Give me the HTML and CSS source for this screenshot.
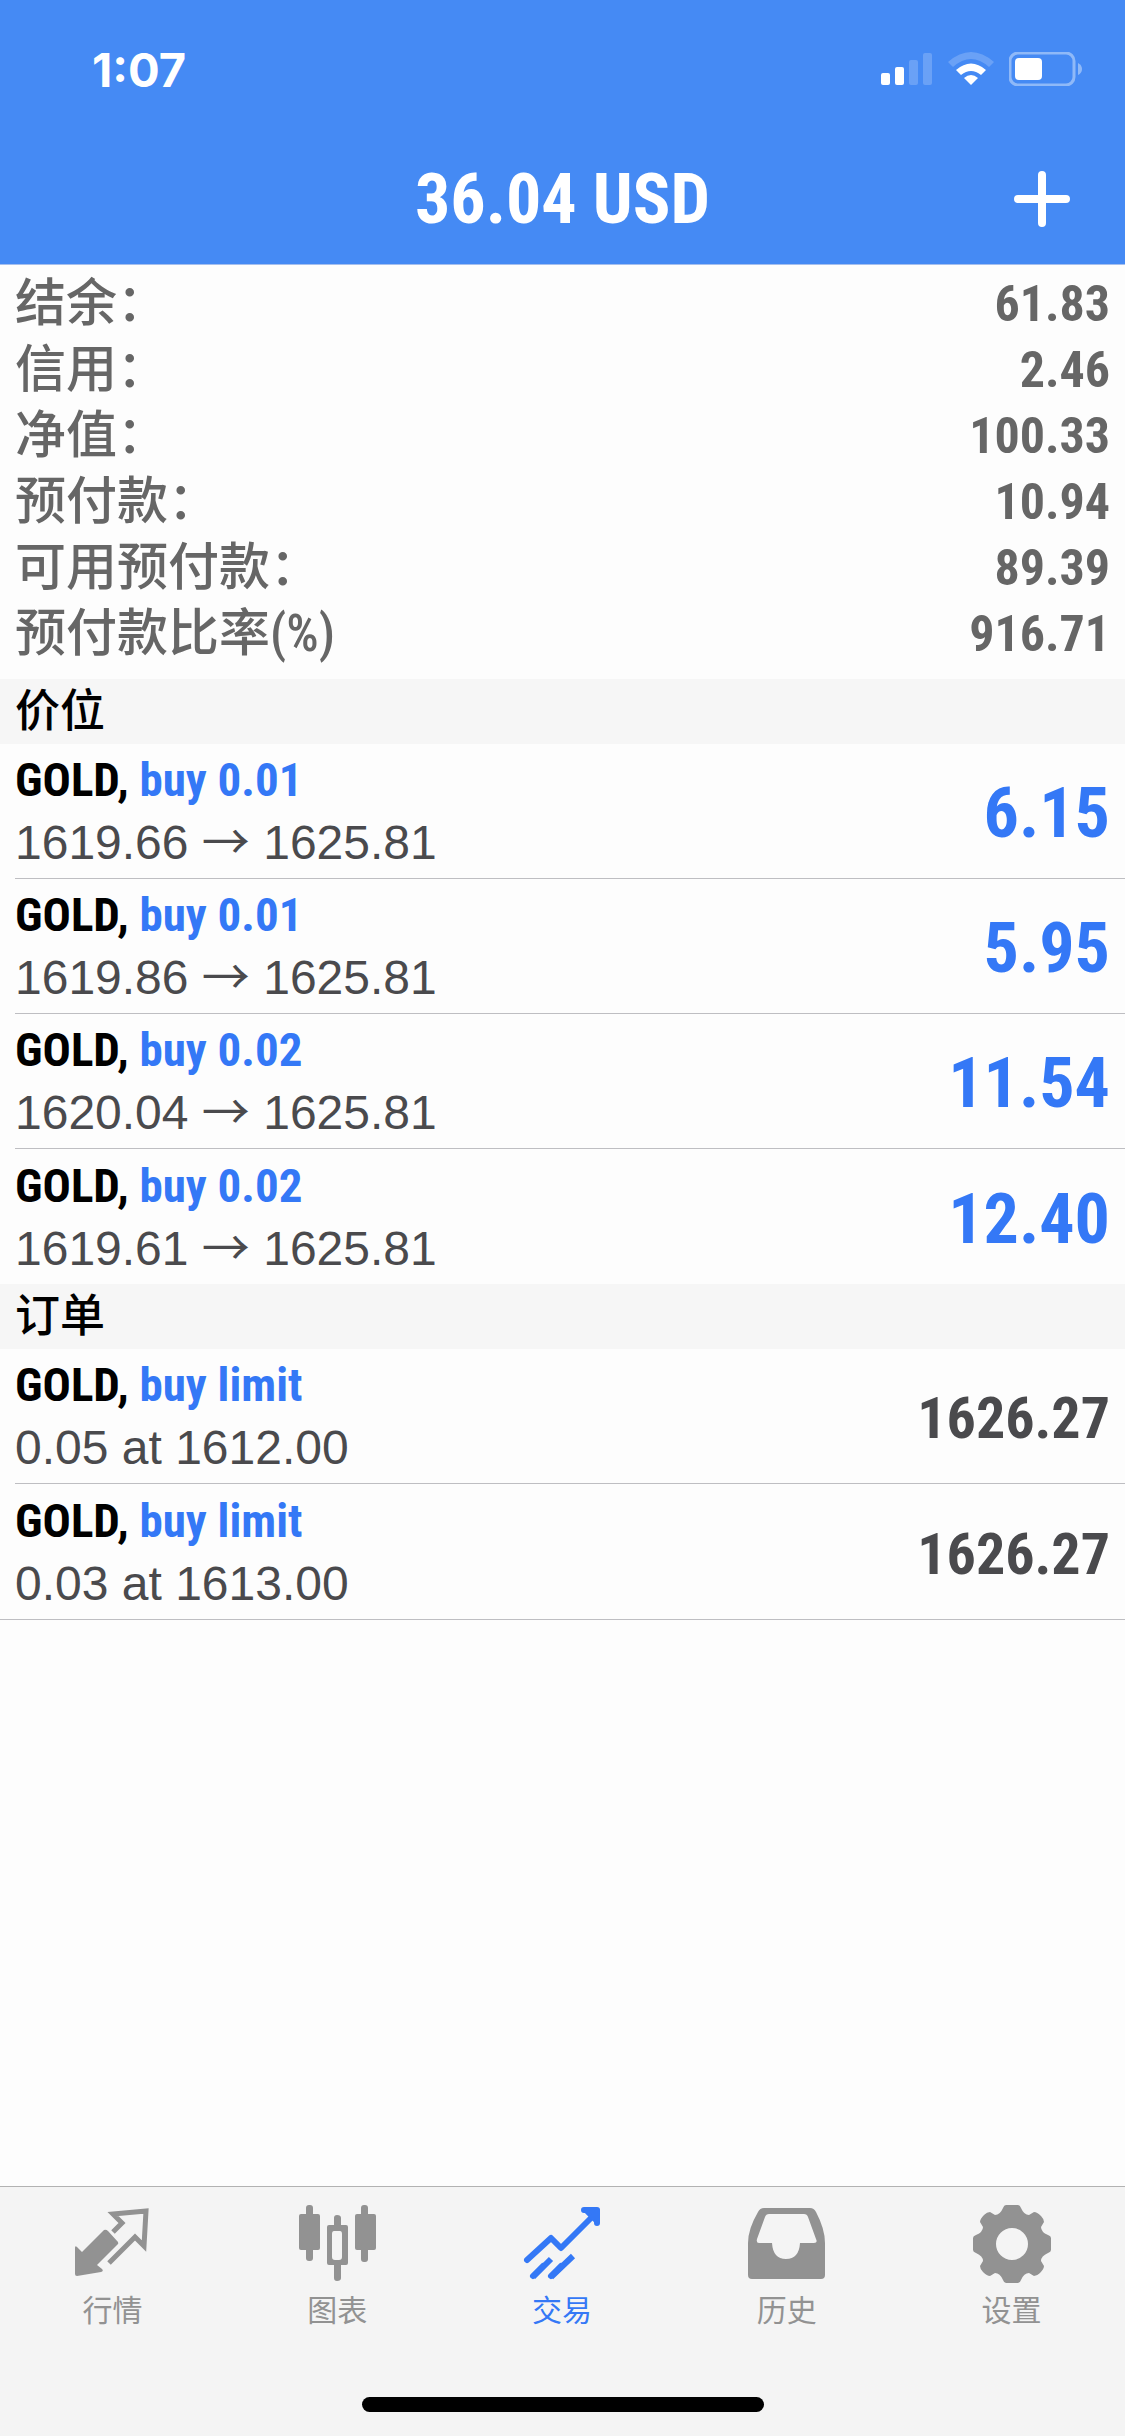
FILE: index.html
```
<!DOCTYPE html>
<html lang="zh-CN">
<head>
    <meta charset="UTF-8">
    <meta name="viewport" content="width=device-width, initial-scale=1.0">
    <title>交易</title>
    <link rel="stylesheet" href="styles.css">
</head>
<body>

    <header class="top">
        <div class="status-bar">
            <span class="clock">1:07</span>
            <div class="status-icons">
                <svg width="52" height="34" viewBox="0 0 52 34" fill="#fff">
                    <rect x="0" y="21" width="9" height="12" rx="2"/>
                    <rect x="14" y="15" width="9" height="18" rx="2"/>
                    <rect x="28" y="8" width="9" height="25" rx="2" opacity=".2"/>
                    <rect x="42" y="1" width="9" height="32" rx="2" opacity=".2"/>
                </svg>
                <svg width="46" height="34" viewBox="0 0 46 34" fill="#fff">
                    <path d="M0 10Q23 -10 46 10L41 15Q23 -1 5 15Z" opacity=".2"/>
                    <path d="M8 18Q23 5 38 18L33 23Q23 15 13 23Z"/>
                    <path d="M16 26Q23 20 30 26L23 33Z"/>
                </svg>
                <svg width="73" height="34" viewBox="0 0 73 34">
                    <rect x="1" y="1" width="64" height="32" rx="8" fill="none" stroke="#fff" stroke-width="3" opacity=".4"/>
                    <rect x="6" y="6" width="27" height="22" rx="4" fill="#fff"/>
                    <path d="M69 11Q73 13 73 17Q73 21 69 23Z" fill="#fff" opacity=".4"/>
                </svg>
            </div>
        </div>
        <div class="nav-bar">
            <h1 class="balance">36.04 USD</h1>
            <button class="add-btn" type="button" aria-label="新订单">
                <svg width="56" height="56" viewBox="0 0 56 56" stroke="#fff" stroke-width="8" stroke-linecap="round">
                    <path d="M28 4V52M4 28H52"/>
                </svg>
            </button>
        </div>
    </header>

    <main class="content">
        <!-- 账户 -->
        <dl class="account">
            <div class="account-row"><dt>结余：</dt><dd>61.83</dd></div>
            <div class="account-row"><dt>信用：</dt><dd>2.46</dd></div>
            <div class="account-row"><dt>净值：</dt><dd>100.33</dd></div>
            <div class="account-row"><dt>预付款：</dt><dd>10.94</dd></div>
            <div class="account-row"><dt>可用预付款：</dt><dd>89.39</dd></div>
            <div class="account-row"><dt>预付款比率(%)</dt><dd>916.71</dd></div>
        </dl>

        <!-- 价位 -->
        <h2 class="section-title">价位</h2>
        <ul class="list">
            <li class="item">
                <div class="info">
                    <p class="symbol">GOLD, <span class="side">buy 0.01</span></p>
                    <p class="detail">1619.66 <span class="arrow">→</span> 1625.81</p>
                </div>
                <span class="profit">6.15</span>
            </li>
            <li class="item">
                <div class="info">
                    <p class="symbol">GOLD, <span class="side">buy 0.01</span></p>
                    <p class="detail">1619.86 <span class="arrow">→</span> 1625.81</p>
                </div>
                <span class="profit">5.95</span>
            </li>
            <li class="item">
                <div class="info">
                    <p class="symbol">GOLD, <span class="side">buy 0.02</span></p>
                    <p class="detail">1620.04 <span class="arrow">→</span> 1625.81</p>
                </div>
                <span class="profit">11.54</span>
            </li>
            <li class="item">
                <div class="info">
                    <p class="symbol">GOLD, <span class="side">buy 0.02</span></p>
                    <p class="detail">1619.61 <span class="arrow">→</span> 1625.81</p>
                </div>
                <span class="profit">12.40</span>
            </li>
        </ul>

        <!-- 订单 -->
        <h2 class="section-title">订单</h2>
        <ul class="list orders">
            <li class="item">
                <div class="info">
                    <p class="symbol">GOLD, <span class="side">buy limit</span></p>
                    <p class="detail">0.05 at 1612.00</p>
                </div>
                <span class="price">1626.27</span>
            </li>
            <li class="item">
                <div class="info">
                    <p class="symbol">GOLD, <span class="side">buy limit</span></p>
                    <p class="detail">0.03 at 1613.00</p>
                </div>
                <span class="price">1626.27</span>
            </li>
        </ul>
    </main>

    <footer class="bottom">
        <nav class="tabs">
            <a class="tab" href="#quotes">
                <svg width="78" height="78" viewBox="0 0 78 78" fill="currentColor">
                    <path d="M31 25Q33 24 35 26L45 37Q46 39 44 40L24 60L29 64Q31 66 28 67L4 71Q2 71 2 69V43Q2 40 4 42L9 47Z"/>
                    <path d="M40 27L49 18L40 9L73 6L71 41L62 32L36 58" fill="none" stroke="currentColor" stroke-width="5"/>
                </svg>
                <span>行情</span>
            </a>
            <a class="tab" href="#charts">
                <svg width="78" height="78" viewBox="0 0 78 78" fill="currentColor">
                    <rect x="8" y="0" width="7" height="56" rx="3"/>
                    <rect x="1" y="9" width="21" height="36" rx="2"/>
                    <rect x="63" y="0" width="7" height="57" rx="3"/>
                    <rect x="57" y="9" width="21" height="36" rx="2"/>
                    <path d="M36 20V13Q36 10 39 10Q43 10 43 13V20H48Q50 20 50 22V58Q50 60 48 60H43V73Q43 76 39 76Q36 76 36 73V60H31Q29 60 29 58V22Q29 20 31 20ZM36 26Q34 26 34 29V52Q34 55 37 55H41Q44 55 44 52V29Q44 26 42 26Z" fill-rule="evenodd"/>
                </svg>
                <span>图表</span>
            </a>
            <a class="tab active" href="#trade">
                <svg width="78" height="78" viewBox="0 0 78 78" fill="none" stroke="currentColor" stroke-width="6" stroke-linecap="round" stroke-linejoin="round">
                    <path d="M4 55L28 33L38 43L70 11"/>
                    <path d="M61 5H74V18"/>
                    <path d="M64 6H74V16Z" fill="currentColor"/>
                    <path d="M10 72L28 54M28 72L50 51" stroke-linecap="butt"/>
                    <path d="M10 71L20 61M28 71L38 61"/>
                </svg>
                <span>交易</span>
            </a>
            <a class="tab" href="#history">
                <svg width="78" height="78" viewBox="0 0 78 78" fill="currentColor">
                    <path d="M16 3H62Q66 3 68 7Q77 24 77 38V70Q77 74 73 74H4Q0 74 0 70V38Q0 24 10 7Q12 3 16 3ZM21 9Q18 9 17 12L9 34Q8 38 11 38H24Q25 54 38 54Q51 54 52 38H66Q70 38 68 34L60 12Q59 9 56 9Z" fill-rule="evenodd"/>
                </svg>
                <span>历史</span>
            </a>
            <a class="tab" href="#settings">
                <svg width="78" height="78" viewBox="-39 -39 78 78" fill="currentColor">
                    <path d="M-6 -39H6Q8 -39 9 -36Q12 -29 17 -29L22 -32Q25 -32 29 -28Q32 -25 32 -22L29 -17Q29 -12 36 -9Q39 -8 39 -6V6Q39 8 36 9Q29 12 29 17L32 22Q32 25 28 29Q25 32 22 32L17 29Q12 29 9 36Q8 39 6 39H-6Q-8 39 -9 36Q-12 29 -17 29L-22 32Q-25 32 -29 28Q-32 25 -32 22L-29 17Q-29 12 -36 9Q-39 8 -39 6V-6Q-39 -8 -36 -9Q-29 -12 -29 -17L-32 -22Q-32 -25 -28 -29Q-25 -32 -22 -32L-17 -29Q-12 -29 -9 -36Q-8 -39 -6 -39ZM0 -16A16 16 0 1 0 0 16A16 16 0 1 0 0 -16Z" fill-rule="evenodd"/>
                </svg>
                <span>设置</span>
            </a>
        </nav>
        <div class="home-indicator"></div>
    </footer>

</body>
</html>
```

FILE: styles.css
```
* {
    box-sizing: border-box;
    margin: 0;
    padding: 0;
}

body {
    display: flex;
    flex-direction: column;
    min-height: 100vh;
    background-color: #fdfdfd;
    font-family: "Liberation Sans", "Noto Sans CJK SC", sans-serif;
}

/* 顶部 */
.top {
    background-color: #458af4;
    color: #fff;
    border-bottom: 1px solid #a5bfee;
}

.status-bar {
    display: flex;
    justify-content: space-between;
    align-items: center;
    height: 132px;
    padding: 6px 43px 0 92px;
}

.clock {
    font-family: "Inter", sans-serif;
    font-size: 47px;
    font-weight: bold;
}

.status-icons {
    display: flex;
    gap: 15px;
}

.nav-bar {
    display: grid;
    grid-template-columns: 1fr auto 1fr;
    align-items: center;
    height: 132px;
    padding: 2px 55px 0;
}

.balance {
    grid-column: 2;
    font-family: "Roboto Condensed", "Liberation Sans", sans-serif;
    font-size: 70px;
    font-weight: bold;
}

.add-btn {
    justify-self: end;
    display: flex;
    border: none;
    background: none;
    cursor: pointer;
}

/* 内容 */
.content {
    flex: 1;
}

.account {
    padding: 6px 15px 12px;
    color: #666;
    font-family: "Roboto Condensed", "Noto Sans CJK SC", sans-serif;
}

.account-row {
    display: flex;
    justify-content: space-between;
    line-height: 66px;
}

.account-row dt {
    font-size: 51px;
    font-weight: 500;
}

.account-row dd {
    font-size: 50px;
    font-weight: bold;
}

.section-title {
    height: 65px;
    padding: 0 15px;
    background-color: #f6f6f6;
    color: #000;
    font-size: 45px;
    font-weight: 500;
    line-height: 66px;
}

.list {
    list-style: none;
}

.item {
    display: flex;
    justify-content: space-between;
    align-items: center;
    height: 135px;
    margin-left: 15px;
    padding-right: 15px;
    border-bottom: 1px solid #bebec2;
}

.item:last-child {
    border-bottom: none;
}

.orders {
    border-bottom: 1px solid #bebec2;
}

.symbol {
    font-family: "Roboto Condensed", "Liberation Sans", sans-serif;
    font-size: 47px;
    font-weight: bold;
    line-height: 64px;
    color: #000;
}

.side {
    color: #3478f6;
}

.detail {
    font-size: 48px;
    line-height: 62px;
    color: #4a4a4d;
}

.arrow {
    font-family: "Noto Sans CJK SC", sans-serif;
    line-height: 1;
}

.profit,
.price {
    padding-top: 4px;
    font-family: "Roboto Condensed", "Liberation Sans", sans-serif;
    font-weight: bold;
}

.profit {
    font-size: 70px;
    color: #3478f6;
}

.price {
    font-size: 58px;
    color: #4a4a4d;
}

/* 底部 */
.bottom {
    background-color: #f4f4f4;
    border-top: 1px solid #b2b2b2;
}

.tabs {
    display: grid;
    grid-template-columns: repeat(5, 1fr);
    padding: 18px 1px 0 0;
}

.tab {
    display: flex;
    flex-direction: column;
    align-items: center;
    gap: 6px;
    color: #929292;
    font-size: 30px;
    line-height: 44px;
    text-decoration: none;
}

.active {
    color: #3478f6;
}

.home-indicator {
    width: 402px;
    height: 15px;
    margin: 64px auto 24px;
    border-radius: 8px;
    background-color: #000;
}
```
